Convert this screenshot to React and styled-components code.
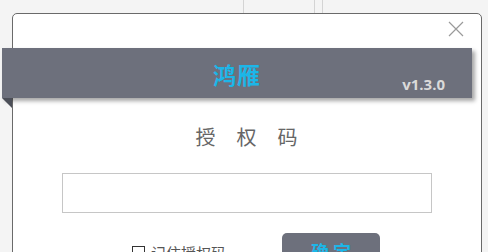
import styled, { createGlobalStyle } from "styled-components"

const GlobalStyle = createGlobalStyle`
    html, body {
        margin: 0;
        padding: 0;
        background: #f4f4f4;
        overflow: hidden;
        font-family: "Noto Sans CJK SC", "Open Sans", sans-serif;
    }
`

function App() {
    return (
        <Page>
            <GlobalStyle />
            <Backdrop>
                <Seam $left={243} />
                <Seam $left={70} />
                <Seam $left={7} />
            </Backdrop>
            <Dialog>
                <TopBar>
                    <Close aria-label="close">
                        <svg width="16" height="16" viewBox="0 0 16 16">
                            <path d="M1 1 L15 15 M15 1 L1 15" stroke="#9a9a9a" strokeWidth="1.2" fill="none" />
                        </svg>
                    </Close>
                </TopBar>
                <Ribbon>
                    <Brand>鸿雁</Brand>
                    <Version>v1.3.0</Version>
                </Ribbon>
                <Heading>授权码</Heading>
                <CodeInput type="text" />
                <Actions>
                    <Remember>
                        <Box />
                        记住授权码
                    </Remember>
                    <Confirm>确 定</Confirm>
                </Actions>
            </Dialog>
        </Page>
    )
}

export default App

const Page = styled.div`
    width: 488px;
    height: 252px;
    overflow: hidden;
`

const Backdrop = styled.div`
    height: 13px;
    display: flex;
`

const Seam = styled.div`
    margin-left: ${p => p.$left}px;
    width: 1px;
    background: #d4d4d4;
`

const Dialog = styled.div`
    margin-left: 12px;
    width: 468px;
    height: 260px;
    background: #fff;
    border: 1px solid #6a6a6a;
    border-radius: 5px;
    display: flex;
    flex-direction: column;
    align-items: center;
`

const TopBar = styled.div`
    align-self: stretch;
    height: 34px;
    display: flex;
    justify-content: flex-end;
    align-items: flex-start;
    padding: 7px 17px 0 0;
    box-sizing: border-box;
`

const Close = styled.button`
    border: none;
    background: none;
    padding: 0;
    width: 16px;
    height: 16px;
    cursor: pointer;
`

const Ribbon = styled.div`
    position: relative;
    align-self: flex-start;
    margin-left: -11px;
    width: 470px;
    height: 50px;
    background: #6d707c;
    box-shadow: 3px 3px 4px rgba(0, 0, 0, 0.35);
    display: flex;
    align-items: center;
    justify-content: center;

    &::after {
        content: '';
        position: absolute;
        left: 0;
        top: 50px;
        border-style: solid;
        border-width: 0 10px 10px 0;
        border-color: transparent #4c4f58 transparent transparent;
    }
`

const Brand = styled.div`
    font-size: 23px;
    font-weight: 700;
    color: #1cb6e8;
    letter-spacing: 1px;
    margin-top: 2px;
`

const Version = styled.div`
    position: absolute;
    right: 27px;
    bottom: 4px;
    font-family: "Open Sans", sans-serif;
    font-size: 15px;
    font-weight: 700;
    color: #dadada;
`

const Heading = styled.div`
    margin-top: 25px;
    font-size: 20px;
    color: #666;
    letter-spacing: 21px;
    margin-right: -21px;
    line-height: 28px;
    margin-left: -1px;
`

const CodeInput = styled.input`
    margin-top: 22px;
    width: 370px;
    height: 40px;
    box-sizing: border-box;
    border: 1px solid #c6c6c6;
    outline: none;
    font-size: 16px;
    padding: 0 10px;
`

const Actions = styled.div`
    margin-top: 20px;
    display: flex;
    align-items: flex-start;
    margin-left: 18px;
`

const Remember = styled.label`
    display: flex;
    align-items: center;
    gap: 6px;
    font-size: 15px;
    color: #555;
    margin-top: 9px;
    width: 150px;
`

const Box = styled.span`
    width: 11px;
    height: 11px;
    border: 1px solid #333;
    background: #fff;
`

const Confirm = styled.button`
    width: 98px;
    height: 36px;
    border: none;
    border-radius: 5px;
    background: #6d707c;
    color: #1cb6e8;
    font-family: "Noto Sans CJK SC", sans-serif;
    font-size: 18px;
    font-weight: 700;
    cursor: pointer;
`
